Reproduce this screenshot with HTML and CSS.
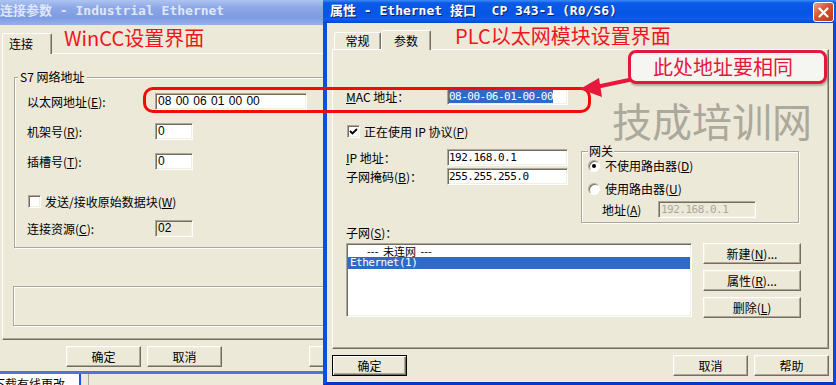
FILE: index.html
```html
<!DOCTYPE html>
<html lang="zh-CN">
<head>
    <meta charset="UTF-8">
    <meta name="viewport" content="width=device-width, initial-scale=1.0">
    <title>连接参数 / Ethernet 接口属性</title>
    <link rel="stylesheet" href="styles.css">
</head>
<body>
    <div class="desktop">

        <!-- WinCC: connection parameters (inactive window, behind) -->
        <div class="win win-back">
            <div class="titlebar">
                <span class="title-text">连接参数 - Industrial Ethernet</span>
            </div>
            <div class="win-body">
                <div class="tabs">
                    <div class="tab sel">连接</div>
                </div>
                <div class="tab-panel">
                    <fieldset class="group s7-group">
                        <legend>S7 网络地址</legend>
                        <div class="row">
                            <label>以太网地址(<u>E</u>):</label>
                            <div class="input addr">08 00 06 01 00 00</div>
                        </div>
                        <div class="row gap">
                            <label>机架号(<u>R</u>):</label>
                            <div class="input num">0</div>
                        </div>
                        <div class="row gap">
                            <label>插槽号(<u>T</u>):</label>
                            <div class="input num">0</div>
                        </div>
                        <div class="check-row raw">
                            <span class="check"></span>
                            <span>发送/接收原始数据块(<u>W</u>)</span>
                        </div>
                        <div class="row last">
                            <label>连接资源(<u>C</u>):</label>
                            <div class="input num disabled">02</div>
                        </div>
                    </fieldset>
                    <div class="status-box"></div>
                </div>
                <div class="btn-row">
                    <button class="btn">确定</button>
                    <button class="btn">取消</button>
                    <button class="btn help">帮助</button>
                </div>
            </div>
        </div>

        <!-- another window peeking out underneath -->
        <div class="under">
            <div class="under-cell">下载有线更改</div>
            <div class="under-split"></div>
            <div class="under-rest"></div>
        </div>

        <!-- STEP 7: CP 343-1 properties (active window) -->
        <div class="win win-front">
            <div class="titlebar">
                <span class="title-text">属性 - Ethernet 接口  CP 343-1 (R0/S6)</span>
                <span class="close-btn">
                    <svg width="11" height="11" viewBox="0 0 11 11"><path d="M1.5 1.5 L9.5 9.5 M9.5 1.5 L1.5 9.5" stroke="#fff" stroke-width="2.2" stroke-linecap="round"/></svg>
                </span>
            </div>
            <div class="win-body">
                <div class="tabs">
                    <div class="tab">常规</div>
                    <div class="tab sel">参数</div>
                </div>
                <div class="tab-panel">
                    <div class="row">
                        <label><u>M</u>AC 地址：</label>
                        <div class="input ip mono"><span class="selected">08-00-06-01-00-00</span></div>
                    </div>
                    <div class="check-row use-ip">
                        <span class="check">
                            <svg width="9" height="9" viewBox="0 0 9 9"><path d="M1 4 L3.5 6.5 L8 2" stroke="#000" stroke-width="1.8" fill="none"/></svg>
                        </span>
                        <span>正在使用 IP 协议(<u>P</u>)</span>
                    </div>
                    <div class="ip-block">
                        <div class="ip-fields">
                            <div class="row">
                                <label><u>I</u>P 地址：</label>
                                <div class="input ip mono">192.168.0.1</div>
                            </div>
                            <div class="row mask">
                                <label>子网掩码(<u>B</u>)：</label>
                                <div class="input ip mono">255.255.255.0</div>
                            </div>
                        </div>
                        <fieldset class="group gw-group">
                            <legend>网关</legend>
                            <div class="radio-row">
                                <span class="radio"><span class="dot"></span></span>
                                <span>不使用路由器(<u>D</u>)</span>
                            </div>
                            <div class="radio-row second">
                                <span class="radio"></span>
                                <span>使用路由器(<u>U</u>)</span>
                            </div>
                            <div class="row gw-addr">
                                <label>地址(<u>A</u>)</label>
                                <div class="input gw mono">192.168.0.1</div>
                            </div>
                        </fieldset>
                    </div>
                    <div class="subnet-label">子网(<u>S</u>)：</div>
                    <div class="subnet-row">
                        <div class="listbox">
                            <div class="item none">--- 未连网 ---</div>
                            <div class="item sel mono">Ethernet(1)</div>
                        </div>
                        <div class="side-btns">
                            <button class="btn wide">新建(<u>N</u>)...</button>
                            <button class="btn wide">属性(<u>R</u>)...</button>
                            <button class="btn wide">删除(<u>L</u>)</button>
                        </div>
                    </div>
                </div>
                <div class="btn-row">
                    <button class="btn default">确定</button>
                    <button class="btn push">取消</button>
                    <button class="btn">帮助</button>
                </div>
            </div>
        </div>

        <!-- red annotations drawn on top of the screenshot -->
        <div class="note note-wincc">WinCC设置界面</div>
        <div class="note note-plc">PLC以太网模块设置界面</div>
        <div class="mark"></div>
        <div class="callout">此处地址要相同</div>
        <svg class="arrow" width="58" height="28" viewBox="0 0 58 28">
            <line x1="53" y1="6" x2="20" y2="13" stroke="#e8173c" stroke-width="4" stroke-linecap="round"/>
            <polygon points="4,15 23,4 26,23" fill="#e8173c"/>
        </svg>
        <div class="watermark">技成培训网</div>
    </div>
</body>
</html>
```

FILE: styles.css
```css
/* two XP-style dialogs overlapping, plus red notes */
* {
    box-sizing: border-box;
}
body {
    margin: 0;
    background-color: #ece9d8;
    font-family: "Noto Sans CJK SC", sans-serif;
    font-size: 12px;
    color: #000;
}
.desktop {
    position: relative;
    width: 836px;
    height: 385px;
    overflow: hidden;
    background-color: #ece9d8;
}
u {
    text-decoration: underline;
    text-underline-offset: 1px;
}
.mono {
    font-family: "DejaVu Sans Mono", "Noto Sans CJK SC", monospace;
    font-size: 11px;
    letter-spacing: -0.5px;
}

/* windows */
.win {
    position: absolute;
    top: 0;
    background-color: #ece9d8;
}
.win-back {
    left: -4px;
    width: 440px;
    height: 374px;
    border-bottom: 3px solid #4f72dd;
}
.win-front {
    left: 323px;
    width: 513px;
    height: 385px;
}
.titlebar {
    display: flex;
    align-items: flex-start;
    justify-content: space-between;
}
.title-text {
    font-family: "DejaVu Sans Mono", "Noto Sans CJK SC", monospace;
    font-size: 13px;
    font-weight: bold;
    white-space: pre;
}
.win-back .titlebar {
    height: 25px;
    padding-left: 4px;
    background: linear-gradient(#aec4f2, #8ca8e7 30%, #7f9be2 70%, #96b0ea);
}
.win-back .title-text {
    color: #dfe7f8;
    line-height: 22px;
}
.win-front .titlebar {
    height: 23px;
    padding: 0 2px 0 7px;
    background: linear-gradient(#3d8cf9, #0b5ae6 3px, #0655e6 60%, #0a5cef 85%, #0348d2);
}
.win-front .title-text {
    color: #fff;
    line-height: 21px;
    text-shadow: 1px 1px #0a1f6c;
}
.close-btn {
    margin-top: 2px;
    width: 21px;
    height: 20px;
    border: 1px solid #fff;
    border-radius: 3px;
    background: linear-gradient(135deg, #eba58e, #d5532f 45%, #c0371a);
    display: flex;
    align-items: center;
    justify-content: center;
}
.win-back .win-body {
    padding: 8px 0 0 6px;
}
.win-front .win-body {
    height: 362px;
    border-left: 4px solid #0d4fe2;
    border-right: 3px solid #0a48dc;
    border-bottom: 3px solid #0536c9;
    padding: 7px 4px 0 5px;
}

/* tabs */
.tabs {
    display: flex;
    align-items: flex-end;
}
.win-back .tabs {
    height: 20px;
}
.win-front .tabs {
    height: 19px;
    padding-left: 2px;
}
.tab {
    width: 47px;
    height: 17px;
    line-height: 16px;
    text-align: center;
    border: 1px solid;
    border-bottom: none;
    border-color: #fff #716f64 transparent #fff;
    box-shadow: inset -1px 0 #aca899;
    border-radius: 2px 2px 0 0;
    background-color: #ece9d8;
}
.tab.sel {
    position: relative;
    z-index: 1;
    width: 50px;
    height: 20px;
    margin-bottom: -1px;
    line-height: 19px;
}
.win-back .tab.sel {
    height: 21px;
    text-align: left;
    padding-left: 6px;
}
.tab-panel {
    border: 1px solid;
    border-color: #fff #716f64 #716f64 #fff;
    box-shadow: inset -1px -1px #aca899;
}
.win-back .tab-panel {
    width: 430px;
    height: 287px;
    padding-left: 10px;
}
.win-front .tab-panel {
    width: 497px;
    height: 300px;
    padding: 38px 0 0 13px;
}

/* group boxes */
.group {
    margin: 0;
    min-width: 0;
    border: 1px solid #aca899;
    box-shadow: inset 1px 1px #fff, 1px 1px #fff;
}
.group legend {
    height: 12px;
    line-height: 12px;
    padding: 0 2px;
    background-color: #ece9d8;
}
.s7-group {
    margin: 17px 0 0 1px;
    width: 410px;
    padding: 10px 0 10px 12px;
}
.s7-group legend {
    margin-left: -9px;
}
.status-box {
    margin-top: 38px;
    width: 420px;
    height: 40px;
    border: 1px solid #aca899;
    box-shadow: inset 1px 1px #fff, 1px 1px #fff;
}

/* form rows */
.row {
    display: flex;
    align-items: center;
    height: 17px;
    line-height: 17px;
    white-space: nowrap;
}
.s7-group .row label {
    width: 128px;
}
.s7-group .row.gap {
    margin-top: 13px;
}
.s7-group .row.last {
    margin-top: 12px;
}
.win-front .row label {
    width: 101px;
}
.check-row {
    display: flex;
    align-items: center;
    gap: 4px;
    height: 13px;
    line-height: 13px;
    white-space: nowrap;
}
.check-row.raw {
    margin-top: 25px;
    padding-left: 1px;
}
.check-row.use-ip {
    margin-top: 20px;
    padding-left: 1px;
}
.check {
    width: 13px;
    height: 13px;
    background-color: #fff;
    border: 1px solid;
    border-color: #aca899 #fff #fff #aca899;
    box-shadow: inset 1px 1px #716f64, inset -1px -1px #f1efe2;
    display: flex;
    align-items: center;
    justify-content: center;
}
.input {
    height: 17px;
    background-color: #fff;
    border: 1px solid;
    border-color: #aca899 #fff #fff #aca899;
    box-shadow: inset 1px 1px #716f64, inset -1px -1px #f1efe2;
    padding: 0 0 0 2px;
    line-height: 15px;
    overflow: hidden;
    white-space: pre;
}
.input.addr {
    width: 152px;
    font-family: "Liberation Sans", sans-serif;
    font-size: 12px;
    word-spacing: 1px;
}
.input.num {
    width: 38px;
    font-family: "Liberation Sans", sans-serif;
    font-size: 12px;
}
.input.disabled {
    background-color: #ece9d8;
}
.input.ip {
    width: 121px;
    padding-left: 1px;
}
.selected {
    background-color: #316ac5;
    color: #fff;
}
.ip-block {
    display: flex;
    align-items: flex-start;
    gap: 13px;
    margin-top: 7px;
}
.ip-fields {
    padding-top: 4px;
}
.row.mask {
    margin-top: 2px;
}
.gw-group {
    width: 218px;
    padding: 3px 0 4px 6px;
}
.gw-group legend {
    padding: 0 1px;
}
.radio-row {
    display: flex;
    align-items: center;
    gap: 5px;
    height: 12px;
    line-height: 12px;
    white-space: nowrap;
}
.radio-row.second {
    margin-top: 11px;
}
.radio {
    width: 12px;
    height: 12px;
    border-radius: 50%;
    background-color: #fff;
    border: 1px solid;
    border-color: #aca899 #fff #fff #aca899;
    box-shadow: inset 1px 1px #716f64;
    display: flex;
    align-items: center;
    justify-content: center;
}
.dot {
    width: 4px;
    height: 4px;
    border-radius: 50%;
    background-color: #000;
}
.gw-addr {
    margin-top: 6px;
    padding-left: 14px;
}
.win-front .gw-addr label {
    width: 56px;
}
.input.gw {
    width: 98px;
    background-color: #ece9d8;
    color: #aca899;
}
.subnet-label {
    margin-top: 3px;
    height: 14px;
    line-height: 14px;
}
.subnet-row {
    display: flex;
    gap: 11px;
    margin-top: 3px;
}
.listbox {
    width: 346px;
    height: 74px;
    padding: 1px;
    background-color: #fff;
    border: 1px solid;
    border-color: #aca899 #fff #fff #aca899;
    box-shadow: inset 1px 1px #716f64, inset -1px -1px #f1efe2;
}
.item {
    height: 12px;
    line-height: 12px;
    padding-left: 2px;
    white-space: pre;
}
.item.none {
    padding-left: 19px;
    font-size: 11px;
    word-spacing: 2px;
}
.item.sel {
    background-color: #316ac5;
    color: #fff;
}
.side-btns {
    display: flex;
    flex-direction: column;
    gap: 6px;
}

/* buttons */
.btn-row {
    display: flex;
    gap: 6px;
    margin-top: 6px;
}
.win-back .btn-row {
    padding-left: 64px;
}
.btn {
    width: 75px;
    height: 21px;
    padding: 0;
    background-color: #ece9d8;
    border: 1px solid;
    border-color: #fff #716f64 #716f64 #fff;
    box-shadow: inset -1px -1px #aca899, inset 1px 1px #f1efe2;
    font-family: "Noto Sans CJK SC", sans-serif;
    font-size: 12px;
    line-height: 19px;
    color: #000;
}
.btn.wide {
    width: 98px;
}
.btn.help {
    margin-left: 81px;
}
.btn.push {
    margin-left: auto;
}
.btn.default {
    border: 1px solid #000;
    box-shadow: inset 1px 1px #fff, inset -1px -1px #716f64, inset -2px -2px #aca899;
}

/* window peeking out below the WinCC dialog */
.under {
    position: absolute;
    left: 0;
    top: 374px;
    width: 323px;
    height: 11px;
    display: flex;
    overflow: hidden;
    background-color: #ece9d8;
}
.under-cell {
    width: 79px;
    background-color: #fff;
    padding-top: 3px;
    line-height: 14px;
    white-space: nowrap;
    overflow: hidden;
    text-indent: -7px;
}
.under-split {
    width: 2px;
    background-color: #1f50e0;
}
.under-rest {
    flex: 1;
    margin-left: 7px;
    border-left: 1px solid #aca899;
}

/* annotations */
.note {
    position: absolute;
    font-size: 20px;
    line-height: 20px;
    color: #f0141e;
    white-space: nowrap;
}
.note-wincc {
    left: 64px;
    top: 28px;
}
.note-plc {
    left: 455px;
    top: 26px;
}
.mark {
    position: absolute;
    left: 143px;
    top: 87px;
    width: 448px;
    height: 26px;
    border: 3px solid #f40a0a;
    border-radius: 10px;
}
.callout {
    position: absolute;
    left: 628px;
    top: 50px;
    width: 199px;
    height: 34px;
    padding-left: 22px;
    border: 3px solid #e5173a;
    border-radius: 8px;
    background-color: #f5f5f1;
    box-shadow: 1px 2px 2px rgba(0, 0, 0, 0.25);
    color: #e5173a;
    font-size: 20px;
    line-height: 28px;
    white-space: nowrap;
}
.arrow {
    position: absolute;
    left: 576px;
    top: 74px;
}
.watermark {
    position: absolute;
    left: 612px;
    top: 100px;
    font-size: 40px;
    line-height: 40px;
    color: #aba89c;
    white-space: nowrap;
}
```
